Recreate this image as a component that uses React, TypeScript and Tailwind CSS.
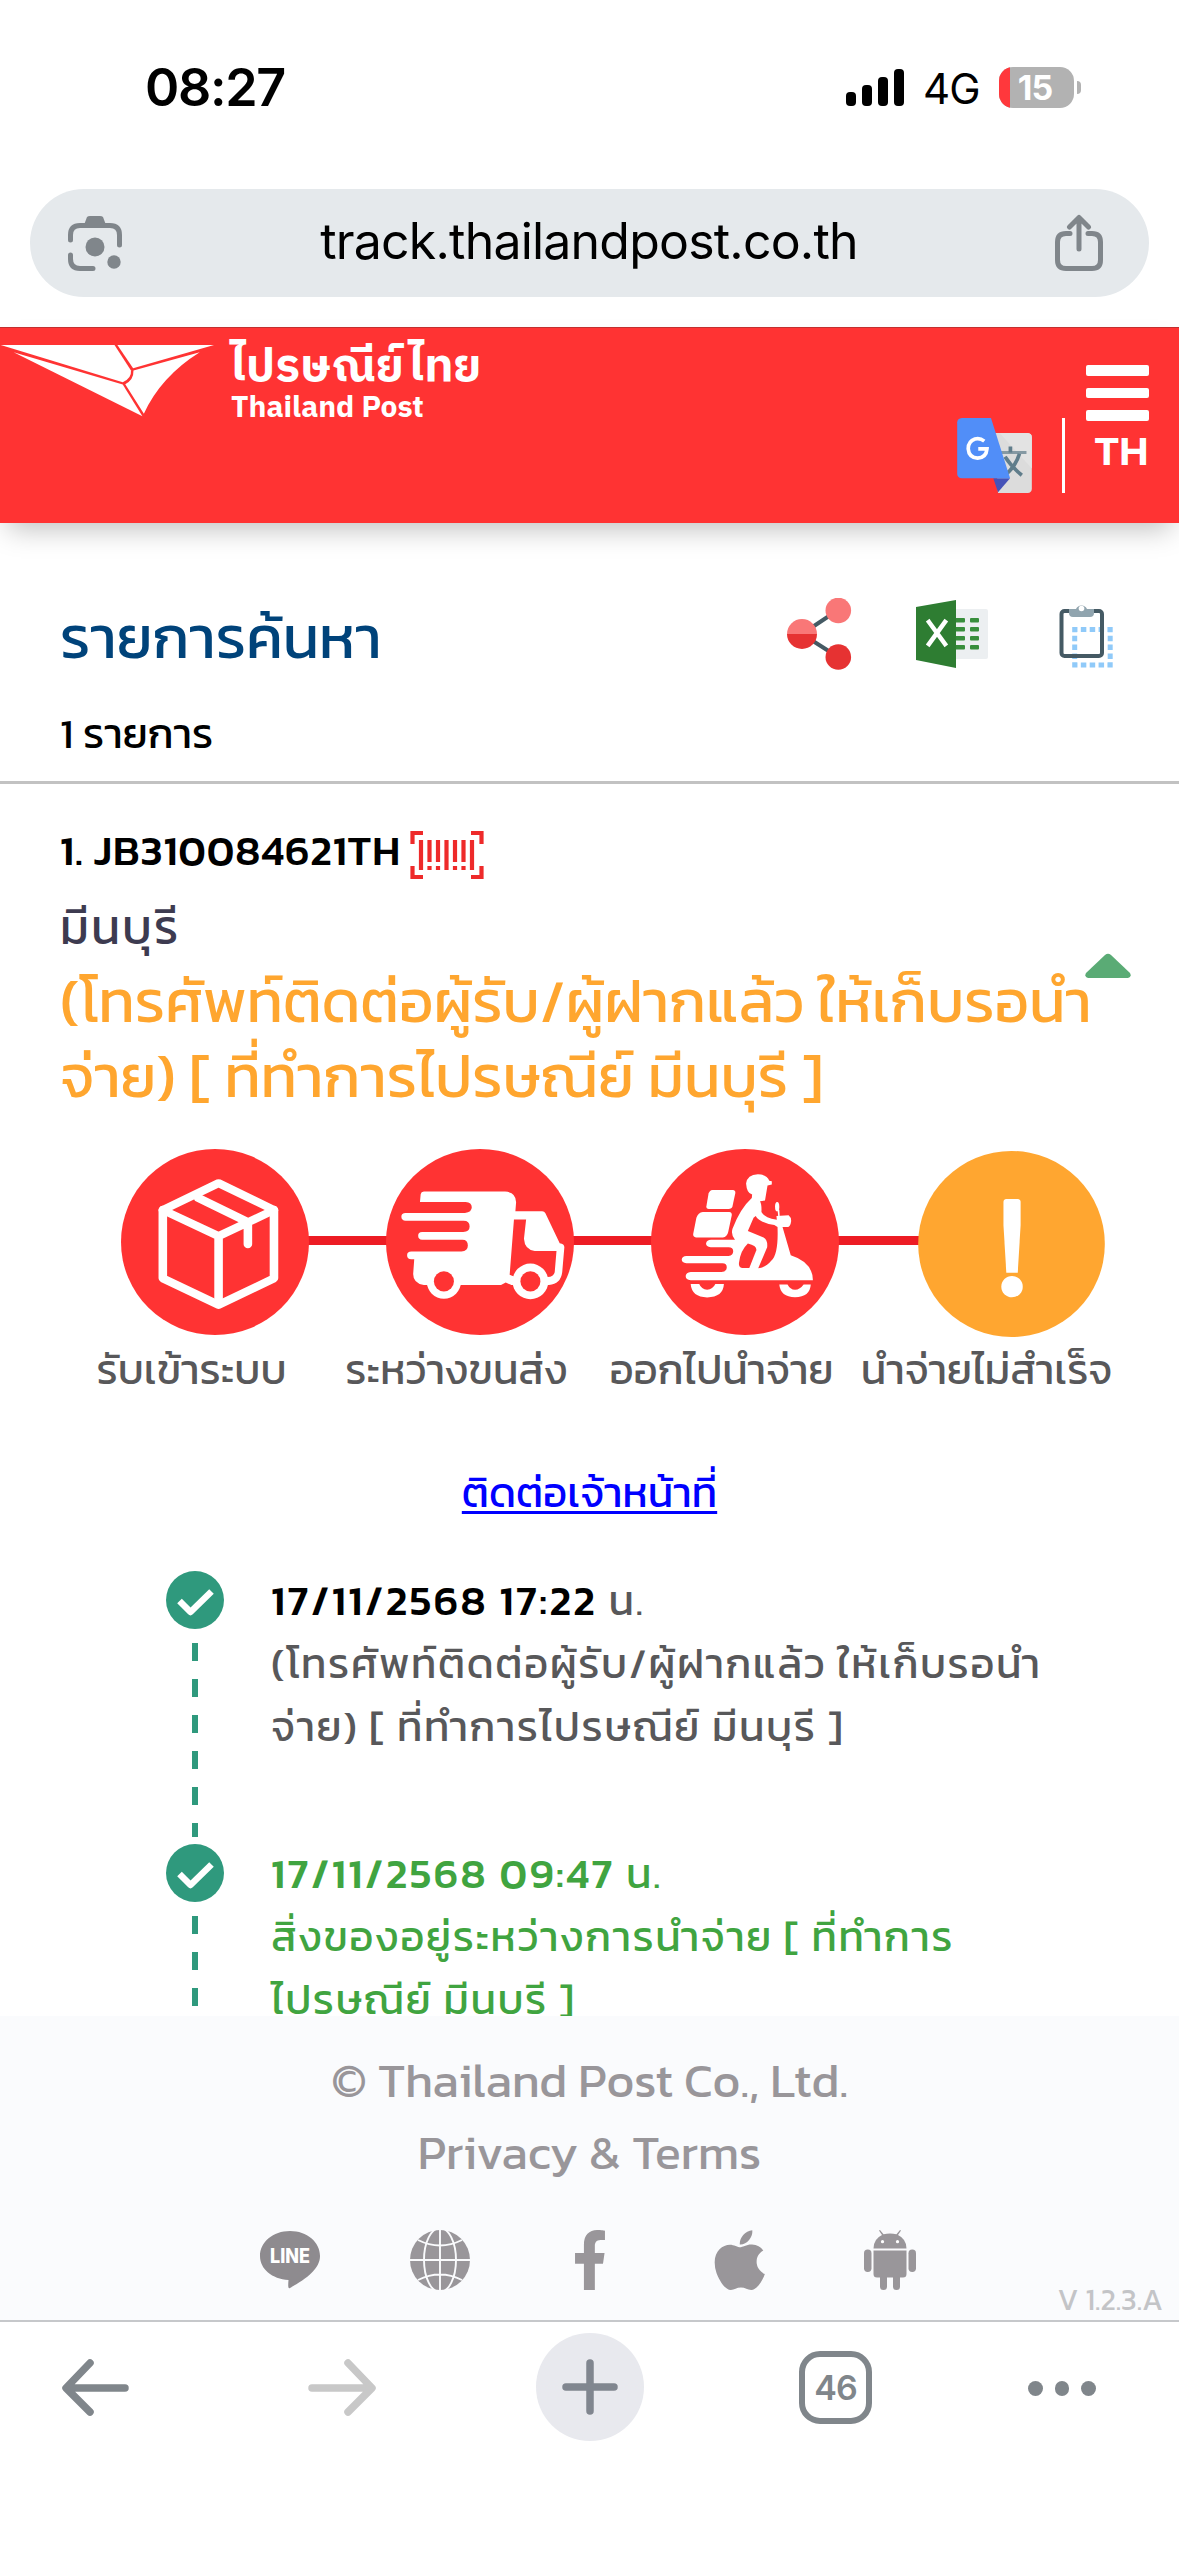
import React from 'react';
import { FaApple, FaFacebookF } from 'react-icons/fa';

const RED = '#ff3333';

const steps = [
  { label: 'รับเข้าระบบ', icon: 'box' },
  { label: 'ระหว่างขนส่ง', icon: 'truck' },
  { label: 'ออกไปนำจ่าย', icon: 'scooter' },
  { label: 'นำจ่ายไม่สำเร็จ', icon: 'failed' },
];

const events = [
  {
    time: '17/11/2568 17:22',
    lines: ['(โทรศัพท์ติดต่อผู้รับ/ผู้ฝากแล้ว ให้เก็บรอนำ', 'จ่าย) [ ที่ทำการไปรษณีย์ มีนบุรี ]'],
    timeColor: 'text-black',
    color: 'text-[#58585a]',
  },
  {
    time: '17/11/2568 09:47',
    lines: ['สิ่งของอยู่ระหว่างการนำจ่าย [ ที่ทำการ', 'ไปรษณีย์ มีนบุรี ]'],
    timeColor: 'text-[#40a440]',
    color: 'text-[#40a440]',
  },
];

const StatusBar = () => (
  <div className="h-[177px] pl-[145px] pr-[98px] flex items-start justify-between font-['Inter',sans-serif] text-black">
    <div className="mt-[57px] text-[52px] leading-[62px] font-semibold tracking-[-1.300px]">08:27</div>
    <div className="mt-[67px] flex items-start">
      <svg width="58" height="42" viewBox="0 0 58 42" className="mr-[19px]">
        <rect x="0" y="25" width="10" height="14" rx="4" />
        <rect x="16" y="18" width="10" height="21" rx="4" />
        <rect x="32" y="10" width="10" height="29" rx="4" />
        <rect x="48" y="2" width="10" height="37" rx="4" />
      </svg>
      <div className="w-[57px] mr-[19px] text-[42px] leading-[44px] tracking-[-0.8px]">4G</div>
      <div className="w-[75px] h-[41px] rounded-[14px] overflow-hidden bg-[#b2b2b2] flex items-center">
        <div className="w-[11px] h-full bg-[#ff383c]" />
        <div className="w-[50px] text-center text-[34px] leading-[41px] font-bold tracking-[-1px] text-white">15</div>
      </div>
      <div className="ml-[3px] mt-[14px] w-[4px] h-[13px] rounded-r-full bg-[#b2b2b2]" />
    </div>
  </div>
);

const AddressBar = () => (
  <div className="h-[150px] px-[30px] pt-3">
    <div className="h-[108px] rounded-full bg-[#e5e9ec] flex items-center justify-between pl-[37px] pr-[45px]">
      <svg width="56" height="57" viewBox="67 214 56 57" fill="none" stroke="#80868b" strokeWidth="5" strokeLinecap="round">
        <path d="M70.500 239V234Q70.500 224.500 80 224.500H110Q119.500 224.500 119.500 234V244" />
        <path d="M70.500 254V258Q70.500 267.500 80 267.500H93" />
        <path d="M84 224L87 216Q88 215 90 215H100Q102 215 103 216L106 224Z" fill="#80868b" stroke="none" />
        <circle cx="95" cy="246" r="9.500" fill="#80868b" stroke="none" />
        <circle cx="114" cy="261" r="6.700" fill="#80868b" stroke="none" />
      </svg>
      <div className="font-['Inter',sans-serif] text-[50px] leading-[60px] text-black tracking-[-0.8px] pb-1">track.thailandpost.co.th</div>
      <svg width="49" height="58" viewBox="1055 215 49 58" fill="none" stroke="#80868b" strokeWidth="5" strokeLinecap="round" strokeLinejoin="round">
        <path d="M1070 234.500H1066Q1057.500 234.500 1057.500 243V261Q1057.500 269.500 1066 269.500H1092Q1100.500 269.500 1100.500 261V243Q1100.500 234.500 1092 234.500H1088" />
        <path d="M1079 219V250M1069.500 228L1079 218.500L1088.500 228" />
      </svg>
    </div>
  </div>
);

const GoogleTranslate = () => (
  <svg width="75" height="75" viewBox="173 234 223 224">
    <path d="M285 279H384Q396 280 396 292V446Q395 457 384 458H295Z" fill="#dcdcdc" />
    <path d="M285 279H300L396 385V292Q396 280 384 279Z" fill="#e3e3e3" />
    <path d="M302 337H380" stroke="#8599a3" strokeWidth="9" />
    <path d="M332 319V337M359 341Q348 378 318 403M316 350Q334 378 366 405" stroke="#607d8b" strokeWidth="11" fill="none" />
    <path d="M281 414H331L295 456Z" fill="#4552b8" />
    <path d="M187 234H274L331 414H187Q174 413 173 401V247Q174 235 187 234Z" fill="#518ef8" />
    <path d="M254 303Q241 293 226 297Q206 304 206 326Q208 352 234 354Q260 352 262 326H236" fill="none" stroke="#fff" strokeWidth="11" />
  </svg>
);

const Header = () => (
  <header className="relative z-10 h-[196px] bg-[#ff3333] border-t border-[#c22f2f] flex justify-between shadow-[0_14px_26px_-8px_rgba(0,0,0,0.25)]">
    <div className="flex">
      <svg width="214" height="72" viewBox="0 75 598 217" preserveAspectRatio="none" fill="#fff" className="mt-[17px]">
        <path d="M2 75H320L366 152Q368 176 343 187Z" />
        <path d="M328 75H598L372 145Z" />
        <path d="M38 97L343 194L398 290Z" />
        <path d="M373 152L558 97Q450 170 402 282L350 193Q374 180 373 152Z" />
      </svg>
      <div className="ml-[17px] font-['IBM_Plex_Sans_Thai','Noto_Sans_Thai',sans-serif] font-bold text-white whitespace-nowrap">
        <div className="mt-[13px] text-[46px] leading-[54px] tracking-[0.2px]">ไปรษณีย์ไทย</div>
        <div className="mt-[-1px] text-[30px] leading-[30px]">Thailand Post</div>
      </div>
    </div>
    <div className="mr-[30px] mt-[37px] flex flex-col items-end">
      <div className="flex flex-col gap-[12px]">
        <div className="w-[63px] h-[10.500px] rounded-[2px] bg-white" />
        <div className="w-[63px] h-[10.500px] rounded-[2px] bg-white" />
        <div className="w-[63px] h-[10.500px] rounded-[2px] bg-white" />
      </div>
      <div className="mt-[-3px] flex">
        <GoogleTranslate />
        <div className="ml-[30px] w-[3px] h-[75px] bg-white" />
        <div className="ml-[30px] mt-[11px] w-[54px] text-center font-['Montserrat','Inter',sans-serif] text-[38px] leading-[46px] font-bold text-white">TH</div>
      </div>
    </div>
  </header>
);

const ShareIcon = () => (
  <svg width="72" height="72" viewBox="784 598 72 72">
    <path d="M802 634L838 610M802 634L838 657" stroke="#455a64" strokeWidth="4" />
    <circle cx="838.300" cy="610.500" r="12.800" fill="#f97777" />
    <circle cx="838.300" cy="657" r="12.800" fill="#e63232" />
    <path d="M787 634A15 15 0 0 1 817 634Z" fill="#f97777" />
    <path d="M787 634A15 15 0 0 0 817 634Z" fill="#e63232" />
  </svg>
);

const ExcelIcon = () => (
  <svg width="74" height="72" viewBox="915 598 74 72">
    <path d="M950 609H985Q987 609 987 611V657Q987 659 985 659H950Z" fill="#eceff1" />
    {[618, 627, 636, 645].map(y => (
      <g key={y} fill="#388e3c">
        <rect x="954" y={y} width="10" height="4.500" rx="1" />
        <rect x="969" y={y} width="9" height="4.500" rx="1" />
      </g>
    ))}
    <path d="M955 600V668L915 660V607Z" fill="#2e7d32" />
    <path d="M928 622L944 644M944 622L928 644" stroke="#fff" strokeWidth="4.500" strokeLinecap="square" />
  </svg>
);

const ClipboardIcon = () => (
  <svg width="72" height="72" viewBox="1050 598 72 72" fill="none">
    <rect x="1074.700" y="629.500" width="35.500" height="35.500" stroke="#90caf9" strokeWidth="5" strokeDasharray="5.500 3.375" strokeDashoffset="2.750" />
    <rect x="1061.500" y="611" width="40.500" height="45" rx="3" stroke="#455a64" strokeWidth="4" />
    <path d="M1069 609H1076A6 6 0 0 1 1087 609H1094V613Q1094 617 1090 617H1073Q1069 617 1069 613Z" fill="#90a4ae" />
    <circle cx="1081.500" cy="608.500" r="2.800" fill="#fff" />
  </svg>
);

const BarcodeIcon = () => (
  <svg width="74" height="50" viewBox="0 0 74 50" fill="none" stroke="#ee2a2a" strokeWidth="4.200">
    <path d="M2.500 14V3H13M61 3H71.500V14M71.500 36V47H61M13 47H2.500V36" />
    <path d="M11 10V40M36.500 10V40M62 10V40M19.500 10V32M28 10V32M45 10V32M53.500 10V32" />
    <path d="M19.500 36V40M28 36V40M45 36V40M53.500 36V40" />
  </svg>
);

const StepIcon = ({ name }: { name: string }) => {
  if (name === 'box') {
    return (
      <svg width="188" height="186" viewBox="87 57 526 555" preserveAspectRatio="none">
        <ellipse cx="350" cy="334.500" rx="263" ry="277.500" fill={RED} />
        <g fill="none" stroke="#fff" strokeWidth="24" strokeLinejoin="round" strokeLinecap="round">
          <path d="M360 159L515 239V443L360 522L204 443V239Z" />
          <path d="M204 239L360 317L515 239M360 317V520M303 203L442 275V341" />
        </g>
      </svg>
    );
  }
  if (name === 'truck') {
    return (
      <svg width="188" height="186" viewBox="829 57 526 555" preserveAspectRatio="none">
        <ellipse cx="1092" cy="334.500" rx="263" ry="277.500" fill={RED} />
        <path
          fill="#fff"
          d="M935 184H1162Q1193 186 1193 216L1191 243H1266Q1272 243 1275 249L1315 338Q1328 340 1328 350L1322 425Q1318 460 1285 463H1180L1164 455Q1155 463 1140 463H935Q905 458 905 430L908 386H900Q888 386 888 374Q888 363 900 363H1040Q1058 362 1058 345Q1058 328 1043 328H930Q919 327 919 316Q919 305 930 305H1045Q1063 303 1063 288Q1063 271 1046 271H884Q872 270 872 259Q872 248 884 248H1050Q1069 246 1069 231Q1069 216 1052 215H924L926 192Q927 185 935 184Z"
        />
        <path fill={RED} d="M1187 267H1221L1215 325Q1217 358 1245 361H1306L1301 425Q1298 439 1281 439H1190L1175 432Z" />
        <ellipse cx="991" cy="452" rx="48" ry="52" fill="#fff" />
        <ellipse cx="991" cy="452" rx="28" ry="30" fill={RED} />
        <ellipse cx="1233" cy="452" rx="50" ry="53" fill="#fff" />
        <ellipse cx="1233" cy="452" rx="28" ry="30" fill={RED} />
      </svg>
    );
  }
  if (name === 'scooter') {
    return (
      <svg width="188" height="186" viewBox="143 57 526 555" preserveAspectRatio="none">
        <ellipse cx="406" cy="334.500" rx="263" ry="277.500" fill={RED} />
        <g fill="#fff">
          <path d="M315 179H372Q380 180 379 188L371 228Q369 236 360 236H305Q297 236 298 228L304 190Q307 180 315 179Z" />
          <path d="M288 245H362Q370 246 369 255L359 305Q356 320 344 321H269Q260 320 261 311L270 262Q275 247 288 245Z" />
          <path d="M442 132Q468 133 474 152L481 153V163L469 166L462 211L448 213Q453 222 452 245Q460 262 495 268L494 257L528 255Q536 262 535 273Q533 289 525 290H511L534 374Q596 395 596 449H254Q240 447 240 436Q241 425 254 424H340Q355 423 355 410Q355 398 343 398H242Q229 397 229 387Q230 376 242 376H360Q373 374 373 362Q373 350 360 350H310Q297 349 297 339Q299 328 311 328H378Q366 314 371 295Q392 235 425 203L426 193Q411 190 409 160Q412 133 442 132Z" />
          <path d="M254 460H278Q284 476 300 477Q316 476 323 460H347Q345 499 300 500Q257 499 254 460Z" />
          <path d="M502 461H525Q532 476 546 477Q560 476 570 461H590Q588 498 546 499Q505 498 502 461Z" />
          <ellipse cx="496" cy="229" rx="6" ry="14" />
          <path d="M497 238L502 238L503 258H499Z" />
        </g>
        <g fill={RED}>
          <path d="M436 257Q446 277 488 284L497 290Q500 370 480 390Q465 410 443 413L468 350Q470 328 458 321L414 302L430 262Z" />
          <path d="M414 339Q438 345 438 358L418 412H398Q388 410 389 397Q393 360 414 339Z" />
        </g>
      </svg>
    );
  }
  return (
    <svg width="187" height="186" viewBox="889 63 523 558" preserveAspectRatio="none" className="mt-[2px]">
      <ellipse cx="1150.500" cy="342" rx="261" ry="279" fill="#ffa630" />
      <path fill="#fff" d="M1136 207H1168Q1176 208 1176 216V285L1168 428H1136L1128 285V216Q1128 208 1136 207Z" />
      <ellipse cx="1152" cy="470" rx="30" ry="32" fill="#fff" />
    </svg>
  );
};

const Progress = () => (
  <div>
    <div className="pl-[121px] flex h-[189px]">
      {steps.map((s, i) => (
        <React.Fragment key={s.icon}>
          {i > 0 && <div className={`${i === 3 ? 'w-[81px]' : 'w-[79px]'} mx-[-1px] mt-[87px] h-[9px] bg-[#ed1c24]`} />}
          <div className="relative shrink-0"><StepIcon name={s.icon} /></div>
        </React.Fragment>
      ))}
    </div>
    <div className="pl-[59px] grid grid-cols-[265px_265px_265px_265px] text-center text-[42px] leading-[63px] text-[#58585a] whitespace-nowrap">
      {steps.map(s => <div key={s.label}>{s.label}</div>)}
    </div>
  </div>
);

const Timeline = () => (
  <div className="mt-[45px] pl-[166px]">
    {events.map(e => (
      <div key={e.time} className="h-[273px] flex">
        <div className="w-[58px] flex flex-col items-center">
          <svg width="58" height="58" viewBox="0 0 58 58" className="mt-[2px] shrink-0">
            <circle cx="29" cy="29" r="29" fill="#2f997d" />
            <path d="M13.500 30L24.500 41L45.500 20.500" fill="none" stroke="#fff" strokeWidth="6.500" strokeLinejoin="round" />
          </svg>
          <div className="mt-[14px] w-[6px] h-[194px] shrink-0 bg-[repeating-linear-gradient(to_bottom,#2f997d_0_18px,transparent_18px_36px)]" />
        </div>
        <div className={`ml-[47px] text-[42px] leading-[63px] whitespace-nowrap tracking-[1.560px] ${e.color}`}>
          <div>
            <span className={`font-medium tracking-[2.380px] ${e.timeColor}`}>{e.time}</span> น.
          </div>
          {e.lines.map(l => <div key={l}>{l}</div>)}
        </div>
      </div>
    ))}
  </div>
);

const LineIcon = () => (
  <svg width="60" height="60" viewBox="0 0 60 60">
    <path d="M30 1C47 1 60 12 60 26C60 38 48 48 30 58C28 59 28 56 28.500 50C12 49 0 39 0 26C0 12 13 1 30 1Z" fill="#8e8b8f" />
    <text x="30" y="33" textAnchor="middle" fontFamily="Inter, sans-serif" fontWeight="800" fontSize="20" fill="#fff" textLength="40" lengthAdjust="spacingAndGlyphs">LINE</text>
  </svg>
);

const GlobeIcon = () => (
  <svg width="60" height="60" viewBox="0 0 60 60">
    <circle cx="30" cy="30" r="30" fill="#99969a" />
    <g fill="none" stroke="#fafbfd" strokeWidth="1.900">
      <path d="M0 30H60M30 0V60M8 10Q30 21 52 10M8 50Q30 39 52 50" />
      <ellipse cx="30" cy="30" rx="16" ry="32" />
    </g>
  </svg>
);

const AndroidIcon = () => (
  <svg width="52" height="60" viewBox="0 0 52 60" fill="#99969a">
    <path d="M9.500 18.500Q9.500 9 18 5L15 0.500L16 0L19.500 4.300Q26 2.500 32.500 4.300L36 0L37 0.500L34 5Q42.500 9 42.500 18.500Z" />
    <path d="M9.500 20.500H42.500V44Q42.500 47.500 39 47.500H36V56.500Q36 60 32.500 60Q29 60 29 56.500V47.500H23V56.500Q23 60 19.500 60Q16 60 16 56.500V47.500H13Q9.500 47.500 9.500 44Z" />
    <rect x="0" y="19.500" width="7.500" height="22.500" rx="3.700" />
    <rect x="44.500" y="19.500" width="7.500" height="22.500" rx="3.700" />
    <circle cx="18.500" cy="11.700" r="1.600" fill="#fff" />
    <circle cx="33.500" cy="11.700" r="1.600" fill="#fff" />
  </svg>
);

const Footer = () => (
  <footer className="h-[306px] bg-[#fafbfd] border-b-2 border-[#c6c8cb] text-[#99969a]">
    <div className="pt-[28px] text-center text-[48px] leading-[72px]">
      <div>© Thailand Post Co., Ltd.</div>
      <div>Privacy &amp; Terms</div>
    </div>
    <div className="mt-[42px] ml-[215px] w-[750px] grid grid-cols-5 justify-items-center">
      <LineIcon />
      <GlobeIcon />
      <FaFacebookF className="w-[60px] h-[60px]" preserveAspectRatio="none" viewBox="-115 0 550 512" />
      <FaApple className="w-[60px] h-[60px]" viewBox="-30 30 448 450" />
      <AndroidIcon />
    </div>
    <div className="mt-[-13px] pr-[16px] text-right text-[30px] leading-[45px] text-[#c3c4c7]">V 1.2.3.A</div>
  </footer>
);

const Toolbar = () => (
  <nav className="h-[234px] pt-[11px] pl-[62px] flex items-start">
    <svg width="68" height="108" viewBox="62 2333 68 108" fill="none" stroke="#80868b" strokeWidth="7.500" strokeLinecap="round" strokeLinejoin="round">
      <path d="M125 2388H67M90 2363L66 2388L90 2412" />
    </svg>
    <svg width="68" height="108" viewBox="308 2333 68 108" fill="none" stroke="#c8c8c8" strokeWidth="7.500" strokeLinecap="round" strokeLinejoin="round" className="ml-[178px]">
      <path d="M312 2388H371M348 2363L372 2388L348 2412" />
    </svg>
    <div className="ml-[160px] w-[108px] h-[108px] rounded-full bg-[#e8e9ee] flex items-center justify-center">
      <svg width="56" height="56" viewBox="0 0 56 56" stroke="#80868f" strokeWidth="7.500" strokeLinecap="round">
        <path d="M4 28H52M28 4V52" />
      </svg>
    </div>
    <div className="ml-[155px] mt-[18px] w-[73px] h-[73px] rounded-[21px] border-[6.500px] border-[#80868b] flex items-center justify-center font-['Inter',sans-serif] text-[34px] font-semibold tracking-[-1px] text-[#80868b]">46</div>
    <div className="ml-[156px] mt-[48px] flex gap-[12px]">
      <div className="w-[14.500px] h-[14.500px] rounded-full bg-[#80868b]" />
      <div className="w-[14.500px] h-[14.500px] rounded-full bg-[#80868b]" />
      <div className="w-[14.500px] h-[14.500px] rounded-full bg-[#80868b]" />
    </div>
  </nav>
);

export default function App() {
  return (
    <div className="w-[1179px] h-[2556px] overflow-hidden bg-white font-['Kanit','Noto_Sans_Thai',sans-serif]">
      <StatusBar />
      <AddressBar />
      <Header />
      <main className="h-[1493px] overflow-hidden">
        <div className="pt-[69px] pl-[60px] pr-[57px] h-[261px] border-b-[3px] border-[#c2c2c2]">
          <div className="flex justify-between">
            <h1 className="text-[60px] leading-[90px] text-[#00437a]">รายการค้นหา</h1>
            <div className="flex gap-[60px] mt-[6px]">
              <ShareIcon />
              <ExcelIcon />
              <ClipboardIcon />
            </div>
          </div>
          <div className="mt-[20px] text-[42px] leading-[63px] text-black">1 รายการ</div>
        </div>

        <div className="pl-[60px] pt-[35px] h-[365px] whitespace-nowrap">
          <div className="flex h-[63px]">
            <div className="text-[42px] leading-[63px] font-medium tracking-[0.9px] text-black">1. JB310084621TH</div>
            <div className="ml-[9px] mt-[11px]"><BarcodeIcon /></div>
          </div>
          <div className="mt-[8px] text-[48px] leading-[75px] tracking-[2px] text-[#3d3b50]">มีนบุรี</div>
          <div className="flex text-[60px] leading-[75px] text-[#ffa62f]">
            <div className="w-[1025px] mt-[-1px]">
              <div>(โทรศัพท์ติดต่อผู้รับ/ผู้ฝากแล้ว ให้เก็บรอนำ</div>
              <div>จ่าย) [ ที่ทำการไปรษณีย์ มีนบุรี ]</div>
            </div>
            <svg width="46" height="26" viewBox="0 0 46 26" className="mt-[-12px]">
              <path d="M3 25Q-1 24 1 20L20 2Q23 -0.500 26 2L45 20Q47 24 43 25Z" fill="#5aab75" />
            </svg>
          </div>
        </div>

        <Progress />

        <div className="mt-[60px] text-center">
          <a className="text-[42px] leading-[63px] text-[#0000ff] underline decoration-[3px] underline-offset-[4px]">ติดต่อเจ้าหน้าที่</a>
        </div>

        <Timeline />
      </main>
      <Footer />
      <Toolbar />
    </div>
  );
}
